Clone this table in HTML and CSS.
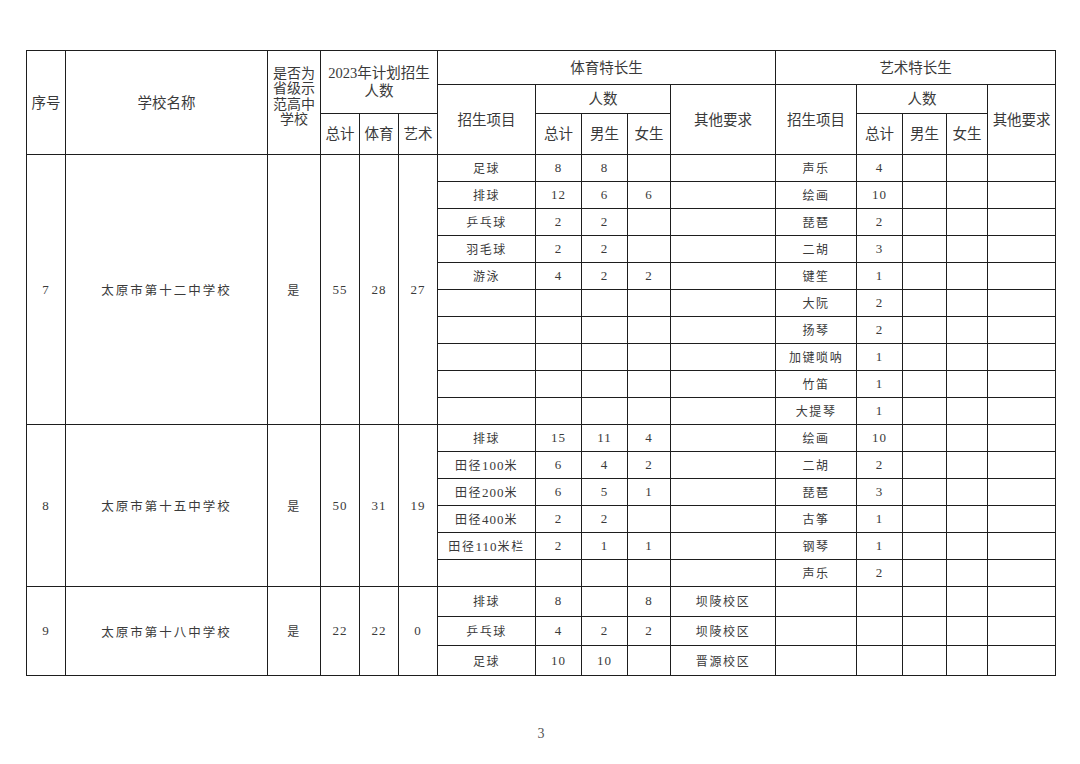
FILE: index.html
```html
<!DOCTYPE html>
<html lang="zh">
<head>
<meta charset="utf-8">
<title>招生计划</title>
<link rel="stylesheet" href="styles.css">
</head>
<body>
<div class="page">
  <table class="plan">
    <colgroup>
      <col class="c-no"><col class="c-name"><col class="c-demo">
      <col class="c-n"><col class="c-n"><col class="c-n">
      <col class="c-item"><col class="c-p"><col class="c-p"><col class="c-p2"><col class="c-req">
      <col class="c-aitem"><col class="c-p"><col class="c-p3"><col class="c-p4"><col class="c-areq">
    </colgroup>
    <thead>
      <tr class="h1">
        <th rowspan="3">序号</th>
        <th rowspan="3">学校名称</th>
        <th rowspan="3" class="demo">是否为<br>省级示<br>范高中<br>学校</th>
        <th rowspan="2" colspan="3" class="plan-h"><span class="num">2023</span>年计划招生<br>人数</th>
        <th colspan="5">体育特长生</th>
        <th colspan="5">艺术特长生</th>
      </tr>
      <tr class="h2">
        <th rowspan="2">招生项目</th>
        <th colspan="3">人数</th>
        <th rowspan="2">其他要求</th>
        <th rowspan="2">招生项目</th>
        <th colspan="3">人数</th>
        <th rowspan="2">其他要求</th>
      </tr>
      <tr class="h3">
        <th>总计</th><th>体育</th><th>艺术</th>
        <th>总计</th><th>男生</th><th>女生</th>
        <th>总计</th><th>男生</th><th>女生</th>
      </tr>
    </thead>
    <tbody>
      <tr>
        <td rowspan="10" class="num">7</td>
        <td rowspan="10" class="school">太原市第十二中学校</td>
        <td rowspan="10">是</td>
        <td rowspan="10" class="num">55</td>
        <td rowspan="10" class="num">28</td>
        <td rowspan="10" class="num">27</td>
        <td>足球</td><td class="num">8</td><td class="num">8</td><td></td><td></td>
        <td>声乐</td><td class="num">4</td><td></td><td></td><td></td>
      </tr>
      <tr><td>排球</td><td class="num">12</td><td class="num">6</td><td class="num">6</td><td></td>
        <td>绘画</td><td class="num">10</td><td></td><td></td><td></td></tr>
      <tr><td>乒乓球</td><td class="num">2</td><td class="num">2</td><td></td><td></td>
        <td>琵琶</td><td class="num">2</td><td></td><td></td><td></td></tr>
      <tr><td>羽毛球</td><td class="num">2</td><td class="num">2</td><td></td><td></td>
        <td>二胡</td><td class="num">3</td><td></td><td></td><td></td></tr>
      <tr><td>游泳</td><td class="num">4</td><td class="num">2</td><td class="num">2</td><td></td>
        <td>键笙</td><td class="num">1</td><td></td><td></td><td></td></tr>
      <tr><td></td><td></td><td></td><td></td><td></td>
        <td>大阮</td><td class="num">2</td><td></td><td></td><td></td></tr>
      <tr><td></td><td></td><td></td><td></td><td></td>
        <td>扬琴</td><td class="num">2</td><td></td><td></td><td></td></tr>
      <tr><td></td><td></td><td></td><td></td><td></td>
        <td>加键唢呐</td><td class="num">1</td><td></td><td></td><td></td></tr>
      <tr><td></td><td></td><td></td><td></td><td></td>
        <td>竹笛</td><td class="num">1</td><td></td><td></td><td></td></tr>
      <tr><td></td><td></td><td></td><td></td><td></td>
        <td>大提琴</td><td class="num">1</td><td></td><td></td><td></td></tr>

      <tr>
        <td rowspan="6" class="num">8</td>
        <td rowspan="6" class="school">太原市第十五中学校</td>
        <td rowspan="6">是</td>
        <td rowspan="6" class="num">50</td>
        <td rowspan="6" class="num">31</td>
        <td rowspan="6" class="num">19</td>
        <td>排球</td><td class="num">15</td><td class="num">11</td><td class="num">4</td><td></td>
        <td>绘画</td><td class="num">10</td><td></td><td></td><td></td>
      </tr>
      <tr><td>田径<span class="num">100</span>米</td><td class="num">6</td><td class="num">4</td><td class="num">2</td><td></td>
        <td>二胡</td><td class="num">2</td><td></td><td></td><td></td></tr>
      <tr><td>田径<span class="num">200</span>米</td><td class="num">6</td><td class="num">5</td><td class="num">1</td><td></td>
        <td>琵琶</td><td class="num">3</td><td></td><td></td><td></td></tr>
      <tr><td>田径<span class="num">400</span>米</td><td class="num">2</td><td class="num">2</td><td></td><td></td>
        <td>古筝</td><td class="num">1</td><td></td><td></td><td></td></tr>
      <tr><td>田径<span class="num">110</span>米栏</td><td class="num">2</td><td class="num">1</td><td class="num">1</td><td></td>
        <td>钢琴</td><td class="num">1</td><td></td><td></td><td></td></tr>
      <tr><td></td><td></td><td></td><td></td><td></td>
        <td>声乐</td><td class="num">2</td><td></td><td></td><td></td></tr>

      <tr class="tall">
        <td rowspan="3" class="num">9</td>
        <td rowspan="3" class="school">太原市第十八中学校</td>
        <td rowspan="3">是</td>
        <td rowspan="3" class="num">22</td>
        <td rowspan="3" class="num">22</td>
        <td rowspan="3" class="num">0</td>
        <td>排球</td><td class="num">8</td><td></td><td class="num">8</td><td>坝陵校区</td>
        <td></td><td></td><td></td><td></td><td></td>
      </tr>
      <tr class="tall"><td>乒乓球</td><td class="num">4</td><td class="num">2</td><td class="num">2</td><td>坝陵校区</td>
        <td></td><td></td><td></td><td></td><td></td></tr>
      <tr class="tall"><td>足球</td><td class="num">10</td><td class="num">10</td><td></td><td>晋源校区</td>
        <td></td><td></td><td></td><td></td><td></td></tr>
    </tbody>
  </table>
  <div class="pageno">3</div>
</div>
</body>
</html>
```

FILE: styles.css
```css
html, body {
  margin: 0;
  padding: 0;
  background: #ffffff;
}

.page {
  padding: 50px 0 0 26px;
  font-family: "Liberation Serif", "Noto Sans CJK SC", serif;
  color: #3c3c3c;
}

.plan {
  border-collapse: collapse;
  table-layout: fixed;
  width: 1030px;
  border: 1.5px solid #1e1e1e;
}

.c-no { width: 39px; }
.c-name { width: 202px; }
.c-demo { width: 53px; }
.c-n { width: 39px; }
.c-item { width: 98px; }
.c-p { width: 46px; }
.c-p2 { width: 43px; }
.c-req { width: 105px; }
.c-aitem { width: 81px; }
.c-p3 { width: 44px; }
.c-p4 { width: 41px; }
.c-areq { width: 68px; }

.plan th,
.plan td {
  border: 1.3px solid #1e1e1e;
  padding: 0;
  text-align: center;
  vertical-align: middle;
  font-weight: normal;
  overflow: hidden;
  white-space: nowrap;
}

.plan th {
  font-size: 14.5px;
  line-height: 18px;
  color: #3a3a3a;
}

.plan td {
  font-size: 12px;
  letter-spacing: 1.6px;
  color: #3a3a3a;
  height: 26px;
}

.plan thead {
  border-bottom: 1.5px solid #1e1e1e;
}

.h1 { height: 34px; }
.h2 { height: 29px; }
.h3 { height: 41px; }

.plan th.demo {
  font-size: 14px;
  line-height: 15.5px;
  padding-bottom: 12px;
}

.plan th.plan-h {
  line-height: 18px;
}

.plan td.school {
  font-size: 12.5px;
  letter-spacing: 2px;
}

.plan td.num,
.plan .num {
  font-family: "Liberation Serif", serif;
  font-size: 13px;
  letter-spacing: 1px;
}

.plan th .num {
  font-size: 14.5px;
  letter-spacing: 0;
}

.plan tr.tall td {
  height: 28.7px;
}

.pageno {
  width: 1030px;
  margin-top: 50px;
  text-align: center;
  font-family: "Liberation Serif", serif;
  font-size: 14px;
  color: #555555;
}
```
